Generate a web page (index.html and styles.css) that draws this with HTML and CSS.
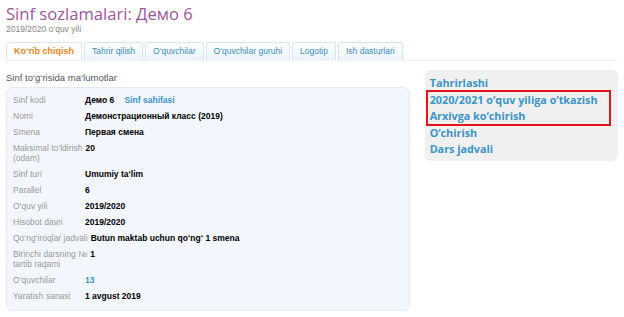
FILE: index.html
```html
<!DOCTYPE html>
<html lang="uz">
<head>
  <meta charset="UTF-8" />
  <title>Sinf sozlamalari</title>
  <link rel="stylesheet" href="styles.css">
</head>
<body>
  <h1>Sinf sozlamalari: Демо 6</h1>
  <div class="subtitle">2019/2020 o‘quv yili</div>

  <ul class="tabs">
    <li class="tab active">Ko‘rib chiqish</li>
    <li class="tab">Tahrir qilish</li>
    <li class="tab">O‘quvchilar</li>
    <li class="tab">O‘quvchilar guruhi</li>
    <li class="tab">Logotip</li>
    <li class="tab">Ish dasturlari</li>
  </ul>

  <div class="content">
    <div class="main">
      <h2>Sinf to‘g‘risida ma‘lumotlar</h2>
      <div class="info">
        <div class="row"><div class="label">Sinf kodi</div><div class="value">Демо 6 <a href="#" class="link">Sinf sahifasi</a></div></div>
        <div class="row"><div class="label">Nomi</div><div class="value">Демонстрационный класс (2019)</div></div>
        <div class="row"><div class="label">Smena</div><div class="value">Первая смена</div></div>
        <div class="row"><div class="label wide">Maksimal to‘ldirish<br>(odam)</div><div class="value">20</div></div>
        <div class="row"><div class="label">Sinf turi</div><div class="value">Umumiy ta‘lim</div></div>
        <div class="row"><div class="label">Parallel</div><div class="value">6</div></div>
        <div class="row"><div class="label">O‘quv yili</div><div class="value">2019/2020</div></div>
        <div class="row"><div class="label">Hisobot davri</div><div class="value">2019/2020</div></div>
        <div class="row"><div class="label wide">Qo‘ng‘iroqlar jadvali</div><div class="value">Butun maktab uchun qo‘ng‘ 1 smena</div></div>
        <div class="row"><div class="label wide">Birinchi darsning №<br>tartib raqami</div><div class="value">1</div></div>
        <div class="row"><div class="label">O‘quvchilar</div><div class="value"><a href="#" class="link plain">13</a></div></div>
        <div class="row"><div class="label">Yaratish sanasi</div><div class="value">1 avgust 2019</div></div>
      </div>
    </div>

    <div class="actions">
      <a href="#">Tahrirlashi</a>
      <a href="#">2020/2021 o‘quv yiliga o‘tkazish</a>
      <a href="#">Arxivga ko‘chirish</a>
      <a href="#">O‘chirish</a>
      <a href="#">Dars jadvali</a>
      <div class="highlight"></div>
    </div>
  </div>
</body>
</html>
```

FILE: styles.css
```css
body {
  margin: 0;
  padding: 4px 6px;
  font-family: 'Liberation Sans', Arial, sans-serif;
  color: #000;
  background: #fff;
}

h1 {
  margin: 0;
  font-family: 'Open Sans', sans-serif;
  font-weight: normal;
  font-size: 16.6px;
  line-height: 20px;
  color: #a0559b;
}

.subtitle {
  font-size: 8.5px;
  color: #888;
  line-height: 11px;
}

.tabs {
  display: flex;
  gap: 2px;
  list-style: none;
  margin: 7px 0 0;
  padding: 0;
  border-bottom: 1px solid #eef3f6;
}

.tab {
  padding: 0 7px;
  height: 17px;
  line-height: 17px;
  font-size: 8.5px;
  color: #3b8ec2;
  border: 1px solid #d6e6ef;
  border-bottom: none;
  border-radius: 3px 3px 0 0;
  background: linear-gradient(#ffffff, #eaf4fa);
}

.tab.active {
  color: #f08520;
  font-size: 9px;
  font-weight: bold;
  background: #fff;
  border-color: #e6e6e6;
}

.content {
  display: flex;
  align-items: flex-start;
  gap: 15px;
}

.main {
  width: 405px;
}

h2 {
  margin: 10px 0 3px;
  font-size: 9.5px;
  font-weight: normal;
  line-height: 13px;
  color: #555;
}

.info {
  background: #f3f7fd;
  border: 1px solid #e4e9ef;
  border-radius: 6px;
  padding: 4px 6px 6px;
}

.row {
  display: flex;
  padding: 3px 0;
  font-size: 8.5px;
  line-height: 10px;
}

.label {
  width: 66px;
  flex-shrink: 0;
  color: #999;
  padding-right: 6px;
}

.label.wide {
  white-space: nowrap;
  width: auto;
  min-width: 66px;
  padding-right: 3px;
}

.value {
  font-weight: bold;
}

.link {
  color: #3b94c9;
  text-decoration: none;
  margin-left: 8px;
}

.link.plain {
  margin-left: 0;
}

.actions {
  position: relative;
  margin-top: 9px;
  width: 184px;
  padding: 5px 5px 3px;
  background: #f0f0f0;
  border-radius: 6px;
}

.actions a {
  display: block;
  font-family: 'Open Sans', sans-serif;
  font-weight: bold;
  font-size: 10.8px;
  line-height: 16.5px;
  color: #3b94c9;
  text-decoration: none;
}

.highlight {
  position: absolute;
  left: 1px;
  top: 20px;
  width: 181px;
  height: 32px;
  border: 2px solid #e8141b;
  pointer-events: none;
}
```
